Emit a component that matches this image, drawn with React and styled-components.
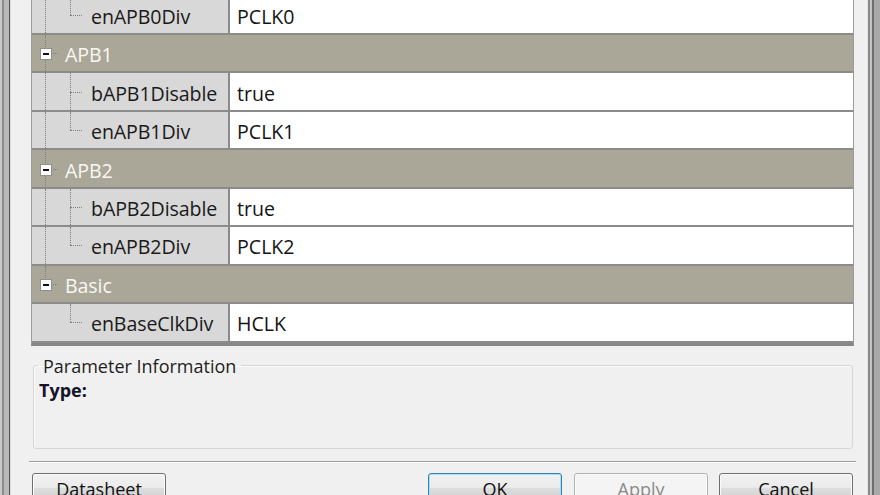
import React from 'react';
import styled, { createGlobalStyle, css } from 'styled-components';

const GlobalStyle = createGlobalStyle`
  html, body {
    margin: 0;
    padding: 0;
    background: #f0f0f0;
    overflow: hidden;
  }
  body {
    font-family: "Open Sans", "Noto Sans", sans-serif;
    font-size: 18px;
    color: #1a1a1a;
  }
`;

const Window = styled.div`
  display: flex;
  width: 880px;
  height: 495px;
  overflow: hidden;
`;

const FrameLeft = styled.div`
  width: 11px;
  flex: none;
  background: linear-gradient(
    to right,
    #c9c9c9 0 2px,
    #8c8c8c 2px 4px,
    #b8b8b8 4px 9px,
    #545454 9px 10px,
    #dcdcdc 10px 11px
  );
`;

const FrameRight = styled.div`
  width: 13px;
  flex: none;
  background: linear-gradient(
    to right,
    #e4e4e4 0 1px,
    #8a8a8a 1px 3px,
    #c4c4c4 3px 5px,
    #6e6e6e 5px 7px,
    #a9a9a9 7px 13px
  );
`;

const Content = styled.div`
  flex: 1;
  display: flex;
  flex-direction: column;
  padding: 0 13px 0 20px;
  min-width: 0;
`;

// property grid
const Grid = styled.div`
  margin-top: -3.4px;
  border-left: 1px solid #9c9c9c;
  border-right: 1px solid #9c9c9c;
  border-bottom: 3px solid #878787;
  background: #fff;
  font-size: 19.6px;
`;

const Row = styled.div`
  display: flex;
  height: 38.44px;
  box-sizing: border-box;
  border-bottom: 2px solid #8b8b8b;
  ${(p) =>
    p.$header &&
    css`
      background: #aaa698;
      color: #f8f8f2;
      align-items: stretch;
    `}
`;

const NameCell = styled.div`
  display: flex;
  align-items: stretch;
  width: 196px;
  flex: none;
  background: #d8d8d8;
  border-right: 2px solid #8b8b8b;
`;

const Label = styled.span`
  display: flex;
  align-items: center;
  padding-left: ${(p) => p.$pad}px;
  padding-top: 3px;
  white-space: nowrap;
  letter-spacing: -0.1px;
`;

const ValueCell = styled.div`
  flex: 1;
  display: flex;
  align-items: center;
  padding-left: 7px;
  padding-top: 3px;
  color: #141414;
`;

const TreeCell = styled.div`
  position: relative;
  flex: none;
  width: ${(p) => p.$w}px;

  &::before {
    content: '';
    display: ${(p) => (p.$up || p.$down ? 'block' : 'none')};
    position: absolute;
    left: ${(p) => p.$c}px;
    top: ${(p) => (p.$up ? '0' : '50%')};
    bottom: ${(p) => (p.$down ? '0' : '50%')};
    border-left: 1px dotted #7e7e7e;
  }

  &::after {
    content: '';
    display: ${(p) => (p.$branch ? 'block' : 'none')};
    position: absolute;
    left: ${(p) => p.$c}px;
    right: 0;
    top: 50%;
    border-top: 1px dotted #7e7e7e;
  }
`;

const Expander = styled.span`
  position: absolute;
  left: ${(p) => p.$c - 5}px;
  top: 50%;
  margin-top: -5px;
  z-index: 1;
  width: 10px;
  height: 10px;
  border: 1px solid #8e8f8f;
  background: #fff;
  display: flex;
  align-items: center;
  justify-content: center;

  &::before {
    content: '';
    width: 6px;
    height: 2px;
    background: #111;
  }
`;

// bottom area
const InfoBox = styled.fieldset`
  margin: 10px 1px 0 2px;
  padding: 0 5px;
  border: 1px solid #d6d6d6;
  border-radius: 3px;
  box-shadow: inset 1px 1px 0 #fbfbfb;
  min-width: 0;
`;

const InfoLegend = styled.legend`
  padding: 0 5px;
  margin-left: -1px;
  font-size: 18px;
  line-height: 20px;
  color: #1e1e1e;
`;

const InfoBody = styled.div`
  height: 68px;
  padding-top: 4px;
`;

const TypeLabel = styled.div`
  font-weight: 700;
  font-size: 18px;
  line-height: 20px;
  color: #14142a;
`;

const Separator = styled.div`
  margin: 12px -2px 0 -2px;
  border-top: 1px solid #a0a0a0;
  border-bottom: 1px solid #fdfdfd;
`;

const ButtonBar = styled.div`
  display: flex;
  margin: 10px 1px 0 1px;
`;

const Spacer = styled.div`
  flex: 1;
`;

const Button = styled.button`
  width: 134px;
  height: 30px;
  flex: none;
  margin-left: ${(p) => p.$gap || 0}px;
  padding: 0;
  border: 1px solid #707070;
  border-radius: 3px;
  background: linear-gradient(#f2f2f2 0%, #ebebeb 48%, #dddddd 52%, #cfcfcf 100%);
  font-family: "Open Sans", "Noto Sans", sans-serif;
  font-size: 18px;
  line-height: 30px;
  color: #111;
  display: flex;
  justify-content: center;
  align-items: flex-start;
  box-shadow: inset 0 0 0 1px #fbfbfb;

  ${(p) =>
    p.$default &&
    css`
      border-color: #3c7fb1;
      box-shadow: inset 0 0 0 1px #9be2fb;
    `}

  ${(p) =>
    p.disabled &&
    css`
      border-color: #adb2b5;
      background: #f4f4f4;
      color: #8a8a8a;
    `}
`;

const groups = [
  { name: 'APB1', items: [['bAPB1Disable', 'true'], ['enAPB1Div', 'PCLK1']] },
  { name: 'APB2', items: [['bAPB2Disable', 'true'], ['enAPB2Div', 'PCLK2']] },
  { name: 'Basic', items: [['enBaseClkDiv', 'HCLK']] },
];

function DataRow({ name, value, lastGroup, lastChild }) {
  return (
    <Row>
      <NameCell>
        <TreeCell $w={26} $c={13} $up={!lastGroup} $down={!lastGroup} />
        <TreeCell $w={24} $c={12} $up $down={!lastChild} $branch />
        <Label $pad={9}>{name}</Label>
      </NameCell>
      <ValueCell>{value}</ValueCell>
    </Row>
  );
}

function GroupRow({ name, last }) {
  return (
    <Row $header>
      <TreeCell $w={26} $c={13} $up $down={!last} $branch>
        <Expander $c={13} />
      </TreeCell>
      <Label $pad={7}>{name}</Label>
    </Row>
  );
}

export default function App() {
  return (
    <>
      <GlobalStyle />
      <Window>
        <FrameLeft />
        <Content>
          <Grid>
            <DataRow name="enAPB0Div" value="PCLK0" lastChild />
            {groups.map((g, gi) => {
              const lastGroup = gi === groups.length - 1;
              return (
                <React.Fragment key={g.name}>
                  <GroupRow name={g.name} last={lastGroup} />
                  {g.items.map(([n, v], i) => (
                    <DataRow
                      key={n}
                      name={n}
                      value={v}
                      lastGroup={lastGroup}
                      lastChild={i === g.items.length - 1}
                    />
                  ))}
                </React.Fragment>
              );
            })}
          </Grid>

          <InfoBox>
            <InfoLegend>Parameter Information</InfoLegend>
            <InfoBody>
              <TypeLabel>Type:</TypeLabel>
            </InfoBody>
          </InfoBox>

          <Separator />

          <ButtonBar>
            <Button>Datasheet</Button>
            <Spacer />
            <Button $default>OK</Button>
            <Button $gap={12} disabled>Apply</Button>
            <Button $gap={11}>Cancel</Button>
          </ButtonBar>
        </Content>
        <FrameRight />
      </Window>
    </>
  );
}
